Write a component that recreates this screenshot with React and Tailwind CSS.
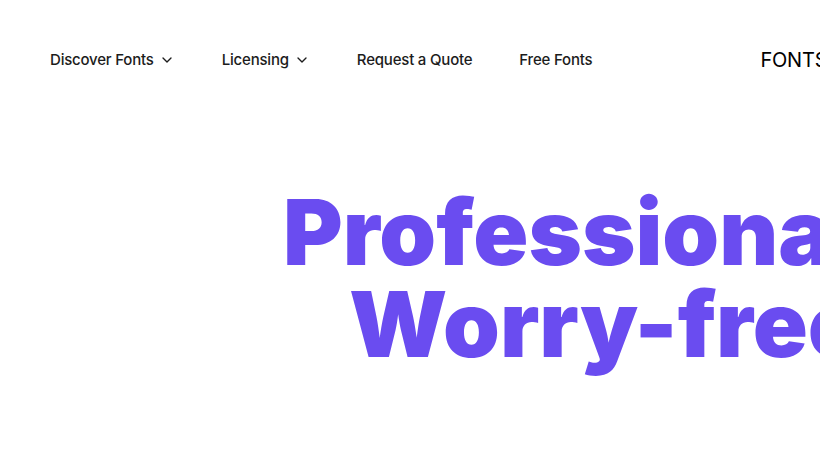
import { ChevronDown } from 'lucide-react';

const navItems = [
  { label: 'Discover Fonts', menu: true },
  { label: 'Licensing', menu: true },
  { label: 'Request a Quote' },
  { label: 'Free Fonts' },
];

export default function App() {
  return (
    <div className="min-h-screen w-full overflow-hidden bg-white font-['Inter',sans-serif] text-[#1c1c1c]">
      {/* Header */}
      <header className="flex h-[120px] items-center whitespace-nowrap pl-[50px]">
        <nav className="flex items-center gap-[47px]">
          {navItems.map((item) => (
            <a key={item.label} href="#" className="flex items-center gap-[5px] text-[15px] font-medium tracking-[-0.2px]">
              {item.label}
              {item.menu && <ChevronDown className="h-4 w-4" strokeWidth={2} />}
            </a>
          ))}
        </nav>
        <a href="#" className="ml-[168px] text-[20px] font-normal tracking-[-0.2px] text-black">
          FONTSPRING
        </a>
      </header>

      {/* Hero */}
      <section className="flex flex-col whitespace-nowrap pt-[66px] text-[91px] font-black leading-[92px] tracking-[0px] text-[#6a4cf0]">
        <h1 className="flex flex-col">
          <span className="ml-[283px]">Professional fonts.</span>
          <span className="ml-[349px]">Worry-free licensing.</span>
        </h1>
      </section>
    </div>
  );
}
